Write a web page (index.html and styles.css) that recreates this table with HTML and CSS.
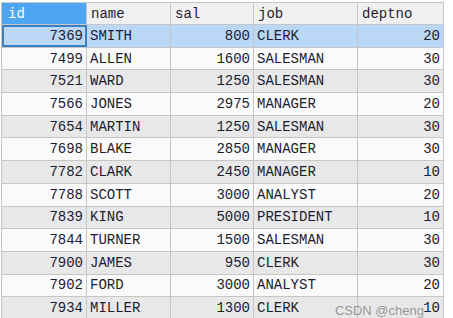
FILE: index.html
```html
<!DOCTYPE html>
<html lang="en">

<head>
    <meta charset="UTF-8">
    <title>emp</title>
    <link rel="stylesheet" href="styles.css">
</head>

<body>
    <div class="grid-wrap">
        <table class="grid">
            <thead>
                <tr>
                    <th class="active">id</th>
                    <th>name</th>
                    <th>sal</th>
                    <th>job</th>
                    <th>deptno</th>
                </tr>
            </thead>
            <tbody>
                <tr class="selected"><td class="num focus">7369</td><td>SMITH</td><td class="num">800</td><td>CLERK</td><td class="num">20</td></tr>
                <tr><td class="num">7499</td><td>ALLEN</td><td class="num">1600</td><td>SALESMAN</td><td class="num">30</td></tr>
                <tr><td class="num">7521</td><td>WARD</td><td class="num">1250</td><td>SALESMAN</td><td class="num">30</td></tr>
                <tr><td class="num">7566</td><td>JONES</td><td class="num">2975</td><td>MANAGER</td><td class="num">20</td></tr>
                <tr><td class="num">7654</td><td>MARTIN</td><td class="num">1250</td><td>SALESMAN</td><td class="num">30</td></tr>
                <tr><td class="num">7698</td><td>BLAKE</td><td class="num">2850</td><td>MANAGER</td><td class="num">30</td></tr>
                <tr><td class="num">7782</td><td>CLARK</td><td class="num">2450</td><td>MANAGER</td><td class="num">10</td></tr>
                <tr><td class="num">7788</td><td>SCOTT</td><td class="num">3000</td><td>ANALYST</td><td class="num">20</td></tr>
                <tr><td class="num">7839</td><td>KING</td><td class="num">5000</td><td>PRESIDENT</td><td class="num">10</td></tr>
                <tr><td class="num">7844</td><td>TURNER</td><td class="num">1500</td><td>SALESMAN</td><td class="num">30</td></tr>
                <tr><td class="num">7900</td><td>JAMES</td><td class="num">950</td><td>CLERK</td><td class="num">30</td></tr>
                <tr><td class="num">7902</td><td>FORD</td><td class="num">3000</td><td>ANALYST</td><td class="num">20</td></tr>
                <tr><td class="num">7934</td><td>MILLER</td><td class="num">1300</td><td>CLERK</td><td class="num">10</td></tr>
            </tbody>
        </table>
        <!-- 水印 -->
        <div class="watermark">CSDN @cheng</div>
    </div>
</body>

</html>
```

FILE: styles.css
```css
* {
    margin: 0;
    padding: 0;
    box-sizing: border-box;
}

body {
    background: #ffffff;
    padding: 2px 0 0 1px;
    font-family: "Liberation Mono", "Courier New", monospace;
    font-size: 14px;
    color: #1c1c30;
}

.grid-wrap {
    position: relative;
    width: 442px;
}

.grid {
    border-collapse: collapse;
    table-layout: fixed;
    width: 442px;
}

.grid th,
.grid td {
    border: 1px solid #c6c6c6;
    height: 22.7px;
    padding: 0 3px;
    white-space: nowrap;
    overflow: hidden;
    text-align: left;
    font-weight: normal;
}

.grid th {
    background: #f0f0f0;
    height: 22px;
    padding-left: 4px;
}

.grid th:nth-child(1) { width: 85px; }
.grid th:nth-child(2) { width: 84px; }
.grid th:nth-child(3) { width: 83px; }
.grid th:nth-child(4) { width: 104px; }
.grid th:nth-child(5) { width: 86px; }

/* 当前列表头 */
.grid th.active {
    background: #4ea6f2;
    color: #ffffff;
    padding-left: 6px;
}

.grid tbody tr:nth-child(odd) td {
    background: #e8e8e8;
}

.grid tbody tr:nth-child(even) td {
    background: #fafafa;
}

.grid tbody tr.selected td {
    background: #bad7f6;
}

.grid td.focus {
    outline: 2px solid #3a7fc2;
    outline-offset: -2px;
}

.grid td.num {
    text-align: right;
    padding-right: 3px;
}

.watermark {
    position: absolute;
    right: 19px;
    bottom: 2px;
    font-family: "Liberation Sans", Arial, sans-serif;
    font-size: 13px;
    color: rgba(120, 120, 120, 0.75);
    pointer-events: none;
}
```
